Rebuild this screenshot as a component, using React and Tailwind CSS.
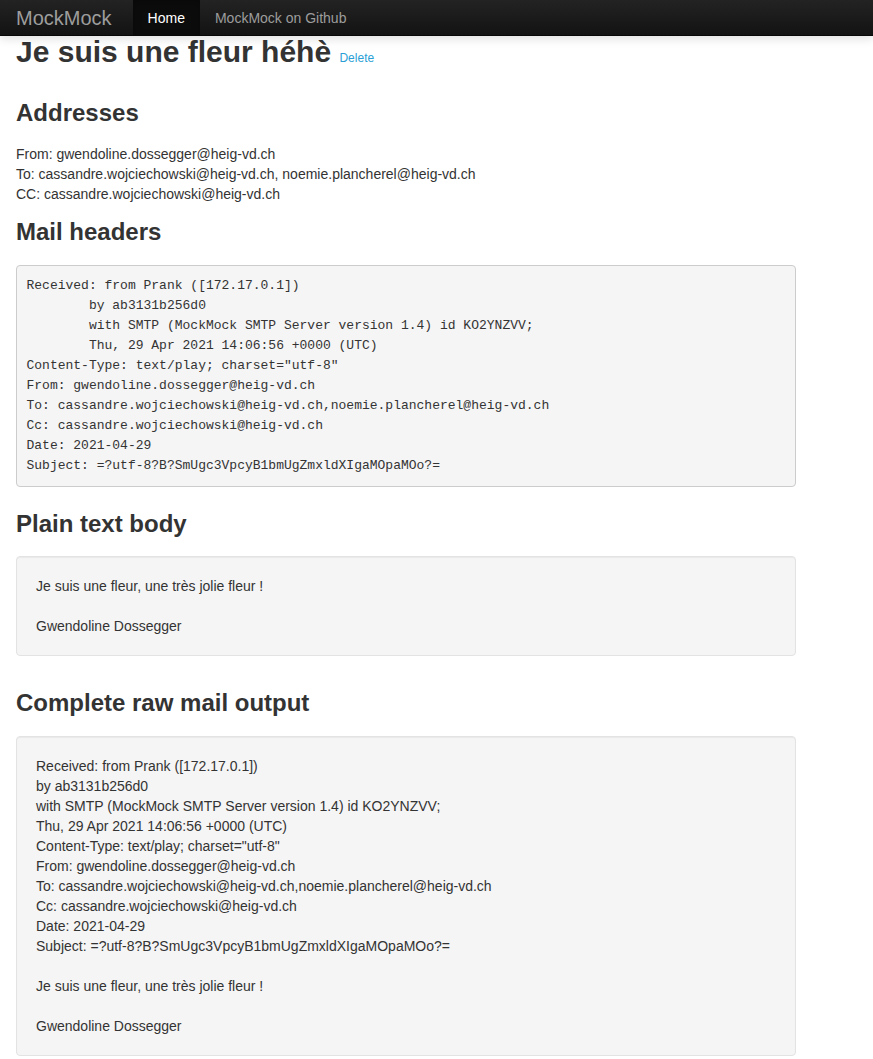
const headers = `Received: from Prank ([172.17.0.1])
        by ab3131b256d0
        with SMTP (MockMock SMTP Server version 1.4) id KO2YNZVV;
        Thu, 29 Apr 2021 14:06:56 +0000 (UTC)
Content-Type: text/play; charset="utf-8"
From: gwendoline.dossegger@heig-vd.ch
To: cassandre.wojciechowski@heig-vd.ch,noemie.plancherel@heig-vd.ch
Cc: cassandre.wojciechowski@heig-vd.ch
Date: 2021-04-29
Subject: =?utf-8?B?SmUgc3VpcyB1bmUgZmxldXIgaMOpaMOo?=`;

const rawLines = [
  'Received: from Prank ([172.17.0.1])',
  'by ab3131b256d0',
  'with SMTP (MockMock SMTP Server version 1.4) id KO2YNZVV;',
  'Thu, 29 Apr 2021 14:06:56 +0000 (UTC)',
  'Content-Type: text/play; charset="utf-8"',
  'From: gwendoline.dossegger@heig-vd.ch',
  'To: cassandre.wojciechowski@heig-vd.ch,noemie.plancherel@heig-vd.ch',
  'Cc: cassandre.wojciechowski@heig-vd.ch',
  'Date: 2021-04-29',
  'Subject: =?utf-8?B?SmUgc3VpcyB1bmUgZmxldXIgaMOpaMOo?=',
  '',
  'Je suis une fleur, une très jolie fleur !',
  '',
  'Gwendoline Dossegger',
];

function Navbar() {
  return (
    <div className="h-9 flex items-stretch bg-gradient-to-b from-[#232323] to-[#131313] border-b border-[#080808] shadow-[0_3px_9px_rgba(0,0,0,0.12)] relative z-10">
      <a className="pl-4 pr-[21px] flex items-center text-[20px] text-[#9d9d9d]">MockMock</a>
      <a className="px-[15px] flex items-center text-[14px] text-white bg-[#0c0c0c] shadow-[inset_0_3px_9px_rgba(0,0,0,0.25)]">Home</a>
      <a className="px-[15px] flex items-center text-[14px] text-[#9d9d9d]">MockMock on Github</a>
    </div>
  );
}

function Well({ lines }) {
  return (
    <div className="w-[780px] bg-[#f5f5f5] border border-[#e3e3e3] rounded p-[19px] shadow-[inset_0_1px_1px_rgba(0,0,0,0.05)]">
      {lines.map((line, i) => (
        <div key={i} className="h-5 leading-5">{line}</div>
      ))}
    </div>
  );
}

export default function App() {
  return (
    <div className="min-h-screen bg-white text-[#333] text-[14px] leading-5 font-['Liberation_Sans',Arial,sans-serif]">
      <Navbar />

      <div className="px-4">
        <h1 className="text-[30px] font-bold leading-[33px] -mt-px">
          Je suis une fleur héhè{' '}
          <a className="text-[12px] font-normal text-[#2a9fd6]">Delete</a>
        </h1>

        <h2 className="text-[24px] font-bold leading-[26px] mt-[25px]">Addresses</h2>
        <div className="mt-[18px]">
          <div>From: gwendoline.dossegger@heig-vd.ch</div>
          <div>To: cassandre.wojciechowski@heig-vd.ch, noemie.plancherel@heig-vd.ch</div>
          <div>CC: cassandre.wojciechowski@heig-vd.ch</div>
        </div>

        <h2 className="text-[24px] font-bold leading-[26px] mt-[15px]">Mail headers</h2>
        <pre className="w-[780px] mt-5 bg-[#f5f5f5] border border-[#ccc] rounded px-[9.5px] pt-[9.5px] pb-[10.5px] text-[13px] leading-5 font-['Liberation_Mono','Courier_New',monospace] whitespace-pre">
          {headers}
        </pre>

        <h2 className="text-[24px] font-bold leading-[26px] mt-6">Plain text body</h2>
        <div className="mt-[19px]">
          <Well lines={['Je suis une fleur, une très jolie fleur !', '', 'Gwendoline Dossegger']} />
        </div>

        <h2 className="text-[24px] font-bold leading-[26px] mt-[34px]">Complete raw mail output</h2>
        <div className="mt-5 pb-1">
          <Well lines={rawLines} />
        </div>
      </div>
    </div>
  );
}
